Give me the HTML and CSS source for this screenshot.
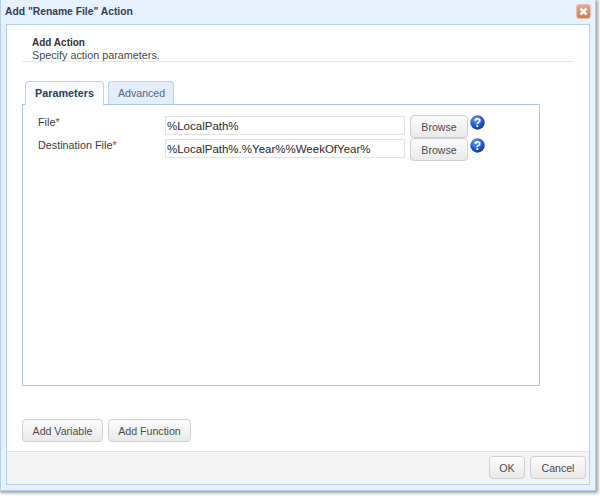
FILE: index.html
```html
<!DOCTYPE html>
<html lang="en">
<head>
<meta charset="utf-8">
<title>Add "Rename File" Action</title>
<link rel="stylesheet" href="styles.css">
</head>
<body>
<div class="window">
  <div class="titlebar">
    <span class="title">Add "Rename File" Action</span>
    <span class="close">
      <svg width="15" height="15" viewBox="0 0 15 15"><path d="M4.5 4.5l6 6M10.5 4.5l-6 6" stroke="#fff" stroke-width="2.6" fill="none"/></svg>
    </span>
  </div>
  <div class="panel">
    <div class="content">
      <div class="head">
        <div class="head-title">Add Action</div>
        <div class="head-sub">Specify action parameters.</div>
      </div>
      <div class="tabs">
        <div class="tab active">Parameters</div>
        <div class="tab">Advanced</div>
      </div>
      <div class="tabpanel">
        <div class="row">
          <label class="label">File<span class="req">*</span></label>
          <div class="input">%LocalPath%</div>
          <button class="btn browse">Browse</button>
          <svg class="help" width="15" height="15" viewBox="0 0 15 15"><defs><radialGradient id="h" cx="40%" cy="30%" r="75%"><stop offset="0" stop-color="#6ea4f2"/><stop offset="0.6" stop-color="#1f56c6"/><stop offset="1" stop-color="#103590"/></radialGradient></defs><circle cx="7.5" cy="7.5" r="7.2" fill="url(#h)"/><text x="7.5" y="12" class="help-mark">?</text></svg>
        </div>
        <div class="row">
          <label class="label">Destination File<span class="req">*</span></label>
          <div class="input">%LocalPath%.%Year%%WeekOfYear%</div>
          <button class="btn browse">Browse</button>
          <svg class="help" width="15" height="15" viewBox="0 0 15 15"><circle cx="7.5" cy="7.5" r="7.2" fill="url(#h)"/><text x="7.5" y="12" class="help-mark">?</text></svg>
        </div>
      </div>
      <div class="actions">
        <button class="btn add-var">Add Variable</button>
        <button class="btn add-fn">Add Function</button>
      </div>
    </div>
    <div class="footer">
      <button class="btn ok">OK</button>
      <button class="btn cancel">Cancel</button>
    </div>
  </div>
</div>
</body>
</html>
```
FILE: styles.css
```css
* { box-sizing: border-box; }
html, body { margin: 0; padding: 0; background: #fff; }
body { width: 600px; height: 496px; overflow: hidden; font-family: "Liberation Sans", Arial, sans-serif; font-size: 10.8px; color: #3a3a3a; }
.window {
  width: 596px; height: 491px; padding: 0 5px 5px;
  background: #e7f0fd;
  border: 1px solid #b5cdf0; border-top: 0;
  box-shadow: 1px 1px 3px 1px rgba(0,0,0,.38);
  display: flex; flex-direction: column;
}
.titlebar { height: 24px; flex: none; display: flex; align-items: center; justify-content: space-between; margin-left: -1px; }
.title { font-weight: bold; font-size: 10.3px; color: #2f3e58; margin-top: -1px; }
.close { width: 15px; height: 15px; margin-right: -1px; margin-top: -2px; border-radius: 3px; background: linear-gradient(#e8a58a, #cf7a5c); display: block; border: 1px solid #e3c2b0; }
.close svg { display: block; margin: -1px; }
.panel { flex: 1; background: #fff; border: 1px solid #b3cdf3; display: flex; flex-direction: column; min-height: 0; }
.content { flex: 1; padding: 12px 15px 0 15px; display: flex; flex-direction: column; min-height: 0; }
.head { height: 25px; border-bottom: 1px solid #e6e6e6; padding-left: 10px; line-height: 12px; flex: none; }
.head-title { font-weight: bold; font-size: 10px; color: #333; }
.head-sub { color: #4a4a4a; }
.tabs { display: flex; gap: 4px; margin-top: 19px; padding-left: 3px; height: 24px; flex: none; position: relative; z-index: 1; }
.tab { height: 23px; padding: 0 9px; line-height: 23px; background: #e3edfb; color: #55657a; border: 1px solid #b9d1f3; border-bottom: 0; border-radius: 4px 4px 0 0; width: 66px; text-align: center; font-size: 10.6px; }
.tab.active { width: 79px; height: 24px; background: linear-gradient(#f7faff, #fff); font-weight: bold; color: #2a3f60; font-size: 10.8px; }
.tabpanel { height: 282px; width: 518px; margin-top: -1px; border: 1px solid #a8c6f0; padding: 11px 0 0 142px; position: relative; flex: none; }
.row { display: flex; height: 22px; align-items: flex-start; margin-bottom: 1px; }
.label { position: absolute; left: 15px; line-height: 13px; }
.req { color: #e02020; }
.input { width: 240px; height: 19px; border: 1px solid #e2e2e2; background: #fff; padding-left: 1px; line-height: 18px; font-size: 11.5px; color: #2a2a2a; }
.btn { font: 10.6px "Liberation Sans", Arial, sans-serif; color: #4a4a4a; height: 23px; padding: 0; background: linear-gradient(#fcfcfc, #e9e9e9); border: 1px solid #cfcfcf; border-radius: 4px; }
.browse { width: 58px; margin-left: 5px; margin-top: -1px; }
.help { margin-left: 2px; margin-top: -1px; flex: none; }
.help-mark { font: bold 12px "Liberation Sans", Arial, sans-serif; fill: #fff; text-anchor: middle; }
.actions { margin-top: 33px; display: flex; gap: 5px; flex: none; }
.add-var { width: 81px; }
.add-fn { width: 83px; }
.footer { height: 33px; flex: none; background: #f3f3f3; border-top: 1px solid #e0e0e0; display: flex; justify-content: flex-end; gap: 5px; padding: 4px 3px 0 0; }
.ok { width: 36px; }
.cancel { width: 56px; }
```
